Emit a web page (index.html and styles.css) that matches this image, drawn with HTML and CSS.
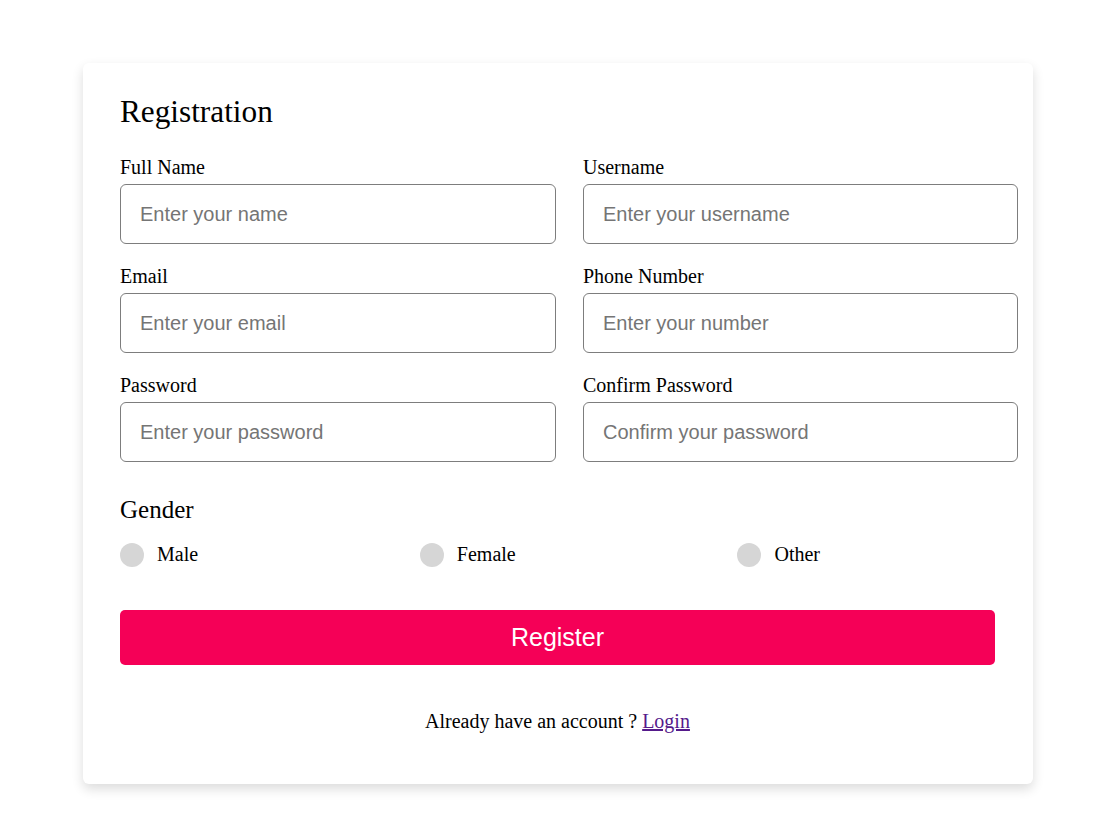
FILE: index.html
```html
<!DOCTYPE html>
<html lang="en">
<head>
<meta charset="utf-8">
<title>Registration</title>
<link rel="stylesheet" href="styles.css">
</head>
<body>
<div class="card">
  <div class="title">Registration</div>
  <form class="form">
    <div class="fields">
      <div class="field">
        <label class="label">Full Name</label>
        <input class="input" type="text" placeholder="Enter your name">
      </div>
      <div class="field">
        <label class="label">Username</label>
        <input class="input" type="text" placeholder="Enter your username">
      </div>
      <div class="field">
        <label class="label">Email</label>
        <input class="input" type="text" placeholder="Enter your email">
      </div>
      <div class="field">
        <label class="label">Phone Number</label>
        <input class="input" type="text" placeholder="Enter your number">
      </div>
      <div class="field">
        <label class="label">Password</label>
        <input class="input" type="text" placeholder="Enter your password">
      </div>
      <div class="field">
        <label class="label">Confirm Password</label>
        <input class="input" type="text" placeholder="Confirm your password">
      </div>
    </div>
    <div class="gender">
      <div class="gender-title">Gender</div>
      <div class="options">
        <label class="option"><span class="dot"></span><span class="opt-text">Male</span></label>
        <label class="option"><span class="dot"></span><span class="opt-text">Female</span></label>
        <label class="option"><span class="dot"></span><span class="opt-text">Other</span></label>
      </div>
    </div>
    <button class="btn" type="button">Register</button>
    <div class="footer">Already have an account ? <a class="link" href="#">Login</a></div>
  </form>
</div>
</body>
</html>
```
FILE: styles.css
```css
html, body {
  margin: 0;
  padding: 0;
  background: #ffffff;
}
body {
  font-family: "Liberation Serif", "Times New Roman", serif;
  color: #000;
  padding: 63px 0 44px 83px;
}
.card {
  width: 950px;
  box-sizing: border-box;
  padding: 31px 38px 51px 37px;
  background: #fff;
  border-radius: 6px;
  box-shadow: 0 5px 12px rgba(0, 0, 0, 0.14);
}
.title {
  font-size: 31.25px;
  line-height: normal;
  margin-bottom: 25.5px;
}
.fields {
  display: grid;
  grid-template-columns: 436px 435px;
  column-gap: 27px;
}
.field {
  margin-bottom: 20.5px;
}
.label {
  display: block;
  font-size: 20px;
  line-height: normal;
  margin-bottom: 5.5px;
}
.input {
  display: block;
  box-sizing: border-box;
  width: 100%;
  height: 60px;
  padding: 0 19px;
  border: 1px solid #7d7d7d;
  border-radius: 6px;
  font-family: "Liberation Sans", Arial, sans-serif;
  font-size: 20px;
  color: #000;
  outline: none;
}
.input::placeholder {
  color: #757575;
}
.gender {
  margin-top: 13px;
}
.gender-title {
  font-size: 25px;
  line-height: normal;
  margin-bottom: 19px;
}
.options {
  width: 700px;
  display: flex;
  justify-content: space-between;
  align-items: center;
}
.option {
  display: flex;
  align-items: center;
  font-size: 20px;
}
.dot {
  width: 24px;
  height: 24px;
  border-radius: 50%;
  background: #d6d6d6;
  margin-right: 13px;
}
.btn {
  display: block;
  width: 875px;
  height: 55px;
  margin-top: 43px;
  border: none;
  border-radius: 5px;
  background: #f50057;
  color: #fff;
  font-family: "Liberation Sans", Arial, sans-serif;
  font-size: 25px;
  padding: 0;
}
.footer {
  text-align: center;
  font-size: 20px;
  margin-top: 45px;
}
.link {
  color: #551a8b;
  text-decoration: underline;
}
```
